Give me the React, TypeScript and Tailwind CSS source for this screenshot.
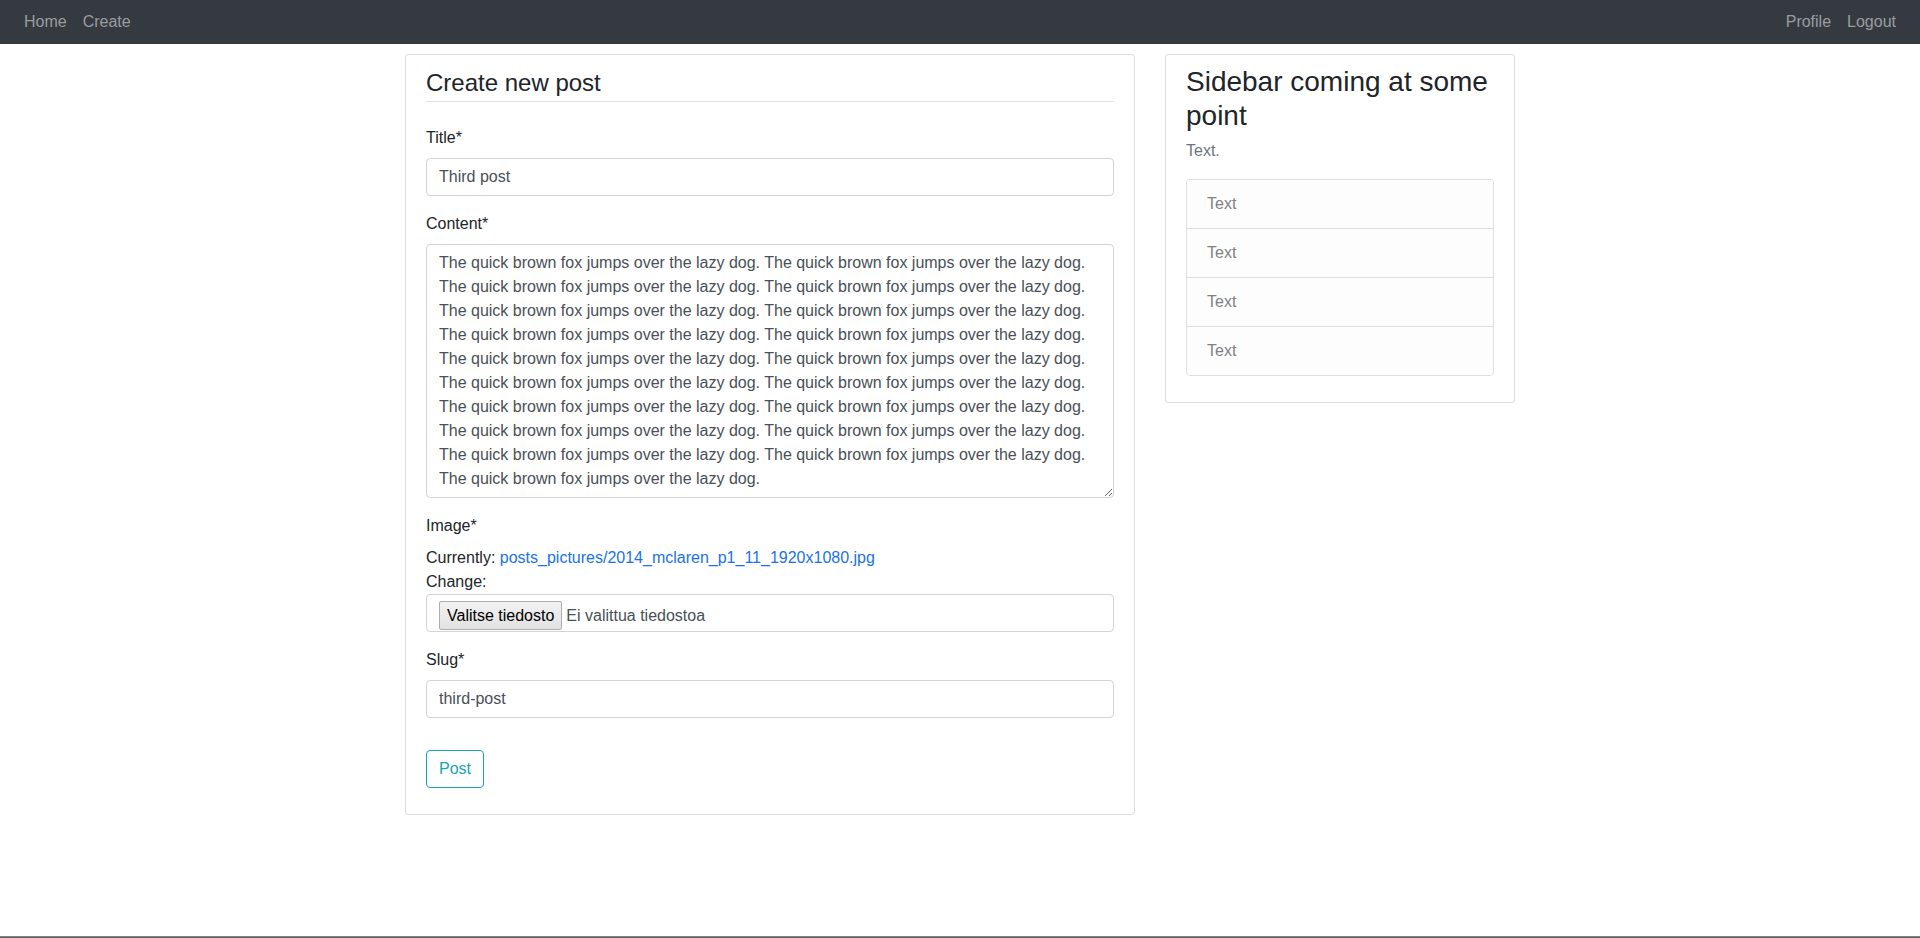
import React from "react";

const sentence = "The quick brown fox jumps over the lazy dog.";
const content = Array.from({ length: 19 }, () => sentence).join(" ");

function Label({ children }: { children: React.ReactNode }) {
  return <label className="block text-[16px] leading-6 mb-2 text-[#212529]">{children}</label>;
}

export default function App() {
  return (
    <div
      className="min-h-[938px] bg-white text-[#212529] text-[16px] leading-6"
      style={{ fontFamily: '"Liberation Sans", Arial, sans-serif' }}
    >
      <nav className="h-11 bg-[#343a40] flex items-center justify-between px-4">
        <div className="flex">
          <a className="px-2 text-[#9a9da0] leading-6">Home</a>
          <a className="px-2 text-[#9a9da0] leading-6">Create</a>
        </div>
        <div className="flex">
          <a className="px-2 text-[#9a9da0] leading-6">Profile</a>
          <a className="px-2 text-[#9a9da0] leading-6">Logout</a>
        </div>
      </nav>

      <div className="w-[1140px] mx-auto flex items-start">
        <main className="w-[760px] px-[15px]">
          <div className="mt-[10px] mb-5 border border-[#dddddd] rounded-[3px] px-5 py-[10px] bg-white">
            <form>
              <fieldset className="mb-4">
                <legend className="w-full text-[24px] leading-9 border-b border-[#dee2e6] mb-6 text-[#212529]">
                  Create new post
                </legend>

                <div className="mb-4">
                  <Label>Title*</Label>
                  <input
                    readOnly
                    value="Third post"
                    className="block w-full h-[38px] border border-[#ced4da] rounded-[4px] px-3 py-[6px] text-[16px] leading-6 text-[#495057] bg-white outline-none"
                  />
                </div>

                <div className="mb-4">
                  <Label>Content*</Label>
                  <textarea
                    readOnly
                    rows={10}
                    value={content}
                    className="block w-full h-[254px] border border-[#ced4da] rounded-[4px] px-3 py-[6px] text-[16px] leading-6 text-[#495057] bg-white outline-none resize-y overflow-hidden"
                  />
                </div>

                <div className="mb-4">
                  <Label>Image*</Label>
                  <div className="leading-6">
                    Currently: <a className="text-[#1a73e8]">posts_pictures/2014_mclaren_p1_11_1920x1080.jpg</a>
                  </div>
                  <div className="leading-6">Change:</div>
                  <div className="h-[38px] border border-[#ced4da] rounded-[4px] px-3 flex items-end pb-px">
                    <span className="h-[29px] px-[7px] flex items-center border border-[#adadad] rounded-[2px] bg-[linear-gradient(#f2f2f2,#e2e2e2)] text-black text-[16px]">
                      Valitse tiedosto
                    </span>
                    <span className="ml-[4px] h-[29px] flex items-center text-[#495057]">Ei valittua tiedostoa</span>
                  </div>
                </div>

                <div className="mb-4">
                  <Label>Slug*</Label>
                  <input
                    readOnly
                    value="third-post"
                    className="block w-full h-[38px] border border-[#ced4da] rounded-[4px] px-3 py-[6px] text-[16px] leading-6 text-[#495057] bg-white outline-none"
                  />
                </div>
              </fieldset>

              <div className="mb-4">
                <button
                  type="button"
                  className="h-[38px] px-3 border border-[#17a2b8] rounded-[4px] text-[#17a2b8] text-[16px] leading-6 bg-white"
                >
                  Post
                </button>
              </div>
            </form>
          </div>
        </main>

        <aside className="w-[380px] px-[15px]">
          <div className="mt-[10px] border border-[#dddddd] rounded-[3px] px-5 py-[10px] bg-white">
            <h3 className="text-[28px] leading-[1.2] mb-[7px] text-[#212529]">Sidebar coming at some point</h3>
            <p className="text-[#6c757d] mb-4">Text.</p>
            <ul className="mb-4 border border-[rgba(0,0,0,0.125)] rounded-[4px] overflow-hidden">
              {["Text", "Text", "Text", "Text"].map((t, i) => (
                <li
                  key={i}
                  className={`bg-[#fdfdfe] text-[#818182] px-5 py-3 leading-6 ${
                    i < 3 ? "border-b border-[rgba(0,0,0,0.125)]" : ""
                  }`}
                >
                  {t}
                </li>
              ))}
            </ul>
          </div>
        </aside>
      </div>

      <div className="fixed bottom-0 left-0 right-0 h-[2px] bg-[linear-gradient(#9a9a9a,#4a4a4a)]" />
    </div>
  );
}
